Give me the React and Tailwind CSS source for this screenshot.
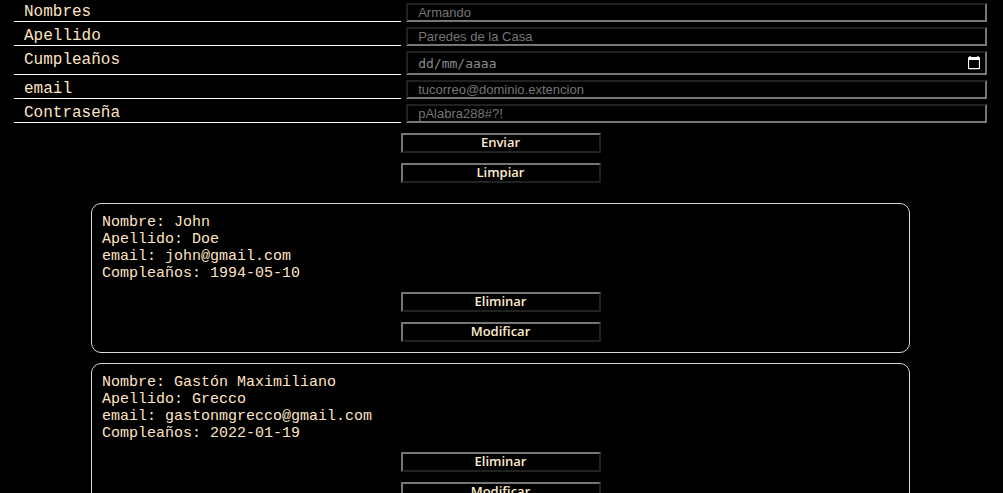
import { useState } from "react";

const inputClass =
  "block w-full h-[19px] bg-black border-2 border-[#767676] [border-style:inset] px-2.5 text-[13px] leading-[15px] font-['Liberation_Sans',Arial,sans-serif] text-[#ffe4c4] placeholder:text-[#757575] placeholder:opacity-100 outline-none";

const fields = [
  { id: "nombres", label: "Nombres", type: "text", placeholder: "Armando" },
  { id: "apellido", label: "Apellido", type: "text", placeholder: "Paredes de la Casa" },
  { id: "cumple", label: "Cumpleaños", type: "date", placeholder: "dd/mm/aaaa" },
  { id: "email", label: "email", type: "email", placeholder: "tucorreo@dominio.extencion" },
  { id: "clave", label: "Contraseña", type: "password", placeholder: "pAlabra288#?!" },
];

const initialUsers = [
  { id: 1, nombre: "John", apellido: "Doe", email: "john@gmail.com", fecha: "1994-05-10" },
  { id: 2, nombre: "Gastón Maximiliano", apellido: "Grecco", email: "gastonmgrecco@gmail.com", fecha: "2022-01-19" },
];

function Button({ children, ...props }) {
  return (
    <button
      className="block w-[200px] h-5 pb-0.5 bg-black border-2 border-[#767676] [border-style:outset] text-[13px] leading-[14px] font-semibold font-['Open_Sans',sans-serif] text-[#ffebcd] text-center"
      {...props}
    >
      {children}
    </button>
  );
}

function DateField({ id, placeholder }) {
  return (
    <div className="flex items-center h-6 w-full bg-black border-2 border-[#767676] [border-style:inset] pl-2.5 pr-1">
      <input
        id={id}
        type="text"
        placeholder={placeholder}
        className="min-w-0 flex-1 bg-transparent pt-0.5 text-[13px] leading-[18px] font-['DejaVu_Sans_Mono',monospace] text-[#ffe4c4] placeholder:text-[#8a8a8a] placeholder:opacity-100 outline-none"
      />
      <button type="button" aria-label="Abrir calendario" className="block text-white">
        <svg width="14" height="16" viewBox="0 0 14 16" fill="currentColor" aria-hidden="true">
          <path
            fillRule="evenodd"
            d="M2.5 1h1.2v1h6.6V1h1.2v1h.5a1 1 0 0 1 1 1v10.2a1 1 0 0 1-1 1H2a1 1 0 0 1-1-1V3a1 1 0 0 1 1-1h.5zM2.1 5v8h9.8V5z"
          />
        </svg>
      </button>
    </div>
  );
}

function Field({ field }) {
  return (
    <div className="grid grid-cols-[2fr_3fr] gap-[5px]">
      <label
        htmlFor={field.id}
        className="border-b border-white pl-2.5 text-base leading-[18px]"
      >
        {field.label}
      </label>
      {field.type === "date" ? (
        <DateField id={field.id} placeholder={field.placeholder} />
      ) : (
        <input id={field.id} type={field.type} placeholder={field.placeholder} className={inputClass} />
      )}
    </div>
  );
}

function UserCard({ user, onRemove }) {
  return (
    <li className="mx-[77px] rounded-[10px] border border-[#d8d8d8] p-2.5 text-[15px] leading-[17px]">
      <p>Nombre: {user.nombre}</p>
      <p>Apellido: {user.apellido}</p>
      <p>email: {user.email}</p>
      <p>Compleaños: {user.fecha}</p>
      <div className="mt-2.5 flex flex-col items-center gap-2.5">
        <Button type="button" onClick={onRemove}>Eliminar</Button>
        <Button type="button">Modificar</Button>
      </div>
    </li>
  );
}

export default function App() {
  const [users, setUsers] = useState(initialUsers);
  return (
    <main className="min-h-screen bg-black pt-[3px] pl-3.5 pr-4 pb-2.5 font-['Liberation_Mono','Courier_New',monospace] text-[#ffe4c4]">
      <form onSubmit={(e) => e.preventDefault()}>
        <div className="flex flex-col gap-[5px]">
          {fields.map((f) => (
            <Field key={f.id} field={f} />
          ))}
        </div>
        <div className="mt-2.5 flex flex-col items-center gap-2.5">
          <Button type="submit">Enviar</Button>
          <Button type="reset">Limpiar</Button>
        </div>
      </form>
      <ul className="mt-5 flex flex-col gap-2.5">
        {users.map((u) => (
          <UserCard
            key={u.id}
            user={u}
            onRemove={() => setUsers(users.filter((x) => x.id !== u.id))}
          />
        ))}
      </ul>
    </main>
  );
}
